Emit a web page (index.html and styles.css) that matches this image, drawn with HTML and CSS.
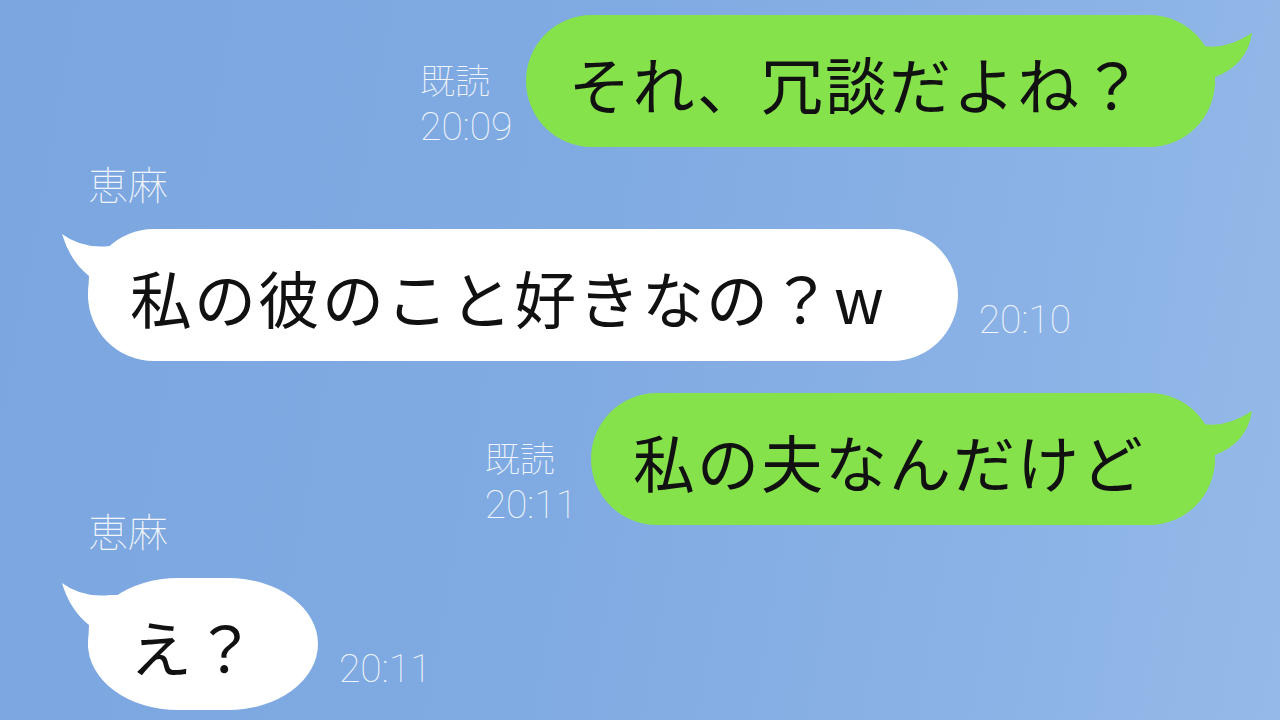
FILE: index.html
```html
<!DOCTYPE html>
<html>
	<head>
		<meta charset="UTF-8">
		<title>トーク</title>
		<link rel="stylesheet" href="styles.css">
	</head>
	<body>
		<div class="chat">
			<div class="row row-me">
				<div class="meta">
					<div class="read">既読</div>
					<div class="time">20:09</div>
				</div>
				<div class="bubble bubble-me">
					それ、冗談だよね？
					<svg class="tail tail-me" viewBox="0 0 70 70"><path d="M67 18 Q41 35 18 31 L10 31 L10 70 L30 70 L30 62 Q62 50 67 18 Z"/></svg>
				</div>
			</div>

			<div class="name">恵麻</div>
			<div class="row row-them">
				<div class="bubble bubble-them">
					私の彼のこと好きなの？w
					<svg class="tail tail-them" viewBox="0 0 70 70"><path d="M4 5 Q24 20 52 17 L62 17 L62 70 L30 70 L31 47 Q12 32 4 5 Z"/></svg>
				</div>
				<div class="meta">
					<div class="time">20:10</div>
				</div>
			</div>

			<div class="row row-me third">
				<div class="meta">
					<div class="read">既読</div>
					<div class="time">20:11</div>
				</div>
				<div class="bubble bubble-me">
					私の夫なんだけど
					<svg class="tail tail-me" viewBox="0 0 70 70"><path d="M67 18 Q41 35 18 31 L10 31 L10 70 L30 70 L30 62 Q62 50 67 18 Z"/></svg>
				</div>
			</div>

			<div class="name name-up">恵麻</div>
			<div class="row row-them">
				<div class="bubble bubble-them short">
					え？
					<svg class="tail tail-them" viewBox="0 0 70 70"><path d="M4 5 Q24 20 52 17 L62 17 L62 70 L30 70 L31 47 Q12 32 4 5 Z"/></svg>
				</div>
				<div class="meta">
					<div class="time">20:11</div>
				</div>
			</div>
		</div>
	</body>
</html>
```

FILE: styles.css
```css
*{
    margin: 0;
    padding: 0;
    box-sizing: border-box;
}
html,body{
    width: 1280px;
    height: 720px;
    overflow: hidden;
}
body{
    background: linear-gradient(100deg, #7ca6df 0%, #80aae2 45%, #8cb3e6 80%, #95bae9 100%);
    font-family: "Noto Sans CJK JP", "Noto Sans", sans-serif;
}
.chat{
    display: flex;
    flex-direction: column;
    padding: 15px 65px 0 88px;
}
.row{
    display: flex;
    align-items: flex-end;
}
.row-me{
    justify-content: flex-end;
}
.row-them{
    justify-content: flex-start;
}
.third{
    margin-top: 32px;
}
.name{
    margin: 14px 0 24px 0;
    font-size: 40px;
    line-height: 44px;
    font-weight: 100;
    color: #f2f6fc;
}
.name-up{
    margin-top: -17px;
    margin-bottom: 26px;
}
.meta{
    color: #f2f6fc;
    white-space: nowrap;
}
.read{
    font-size: 35px;
    line-height: 51px;
    font-weight: 100;
}
.time{
    font-family: Roboto, "Noto Sans", sans-serif;
    font-size: 39px;
    line-height: 46px;
    font-weight: 100;
}
.row-me .meta{
    margin: 0 14px -3px 0;
}
.row-them .meta{
    margin: 0 0 18px 21px;
}
.bubble{
    position: relative;
    display: flex;
    align-items: center;
    height: 132px;
    padding: 4px 70px 0 42px;
    border-radius: 66px;
    font-size: 62px;
    letter-spacing: 2px;
    color: #111;
    white-space: nowrap;
}
.bubble-me{
    background: #86e24b;
}
.bubble-them{
    background: #fff;
    padding-right: 72px;
}
.short{
    padding-right: 60px;
    border-radius: 90px / 66px;
}
.tail{
    position: absolute;
    top: 0;
    width: 70px;
    height: 70px;
}
.tail-me{
    right: -40px;
    fill: #86e24b;
}
.tail-them{
    left: -30px;
    fill: #fff;
}
```
